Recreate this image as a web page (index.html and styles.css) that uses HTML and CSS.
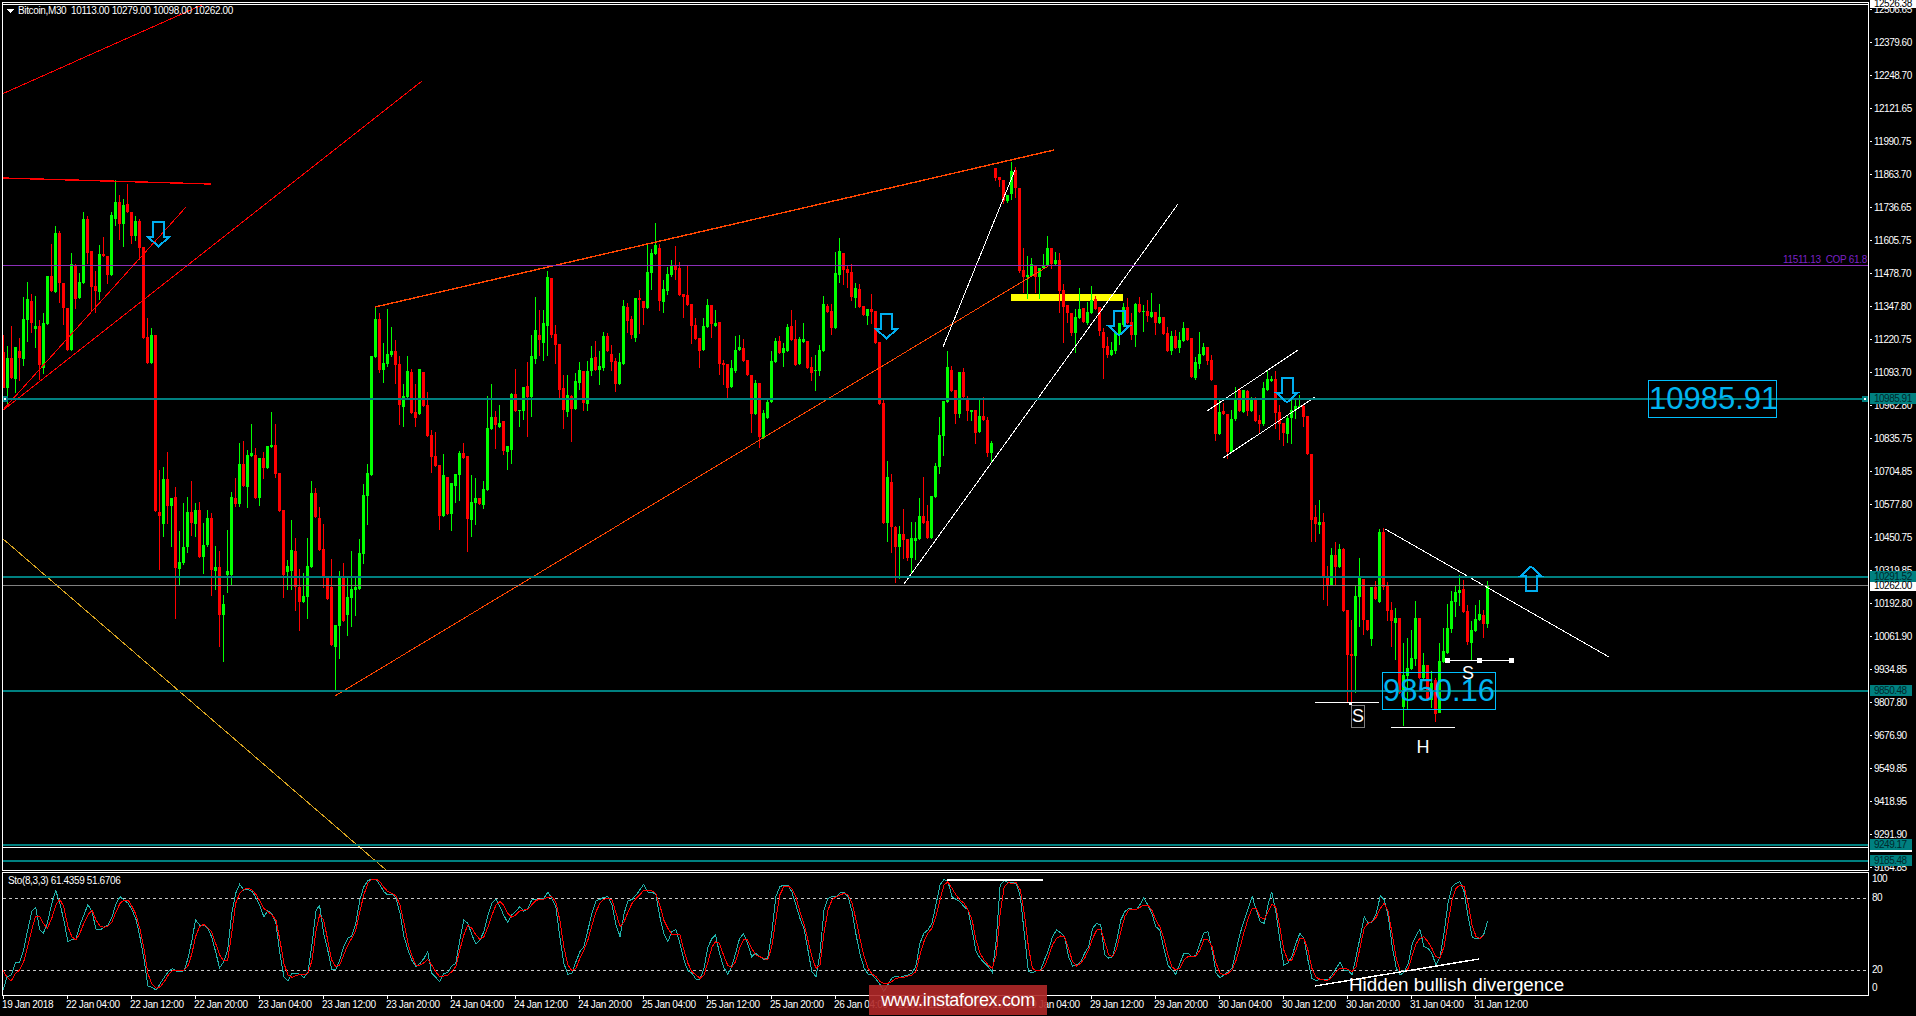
FILE: index.html
```html
<!DOCTYPE html>
<html lang="en">
<head>
<meta charset="utf-8">
<title>Bitcoin,M30</title>
<link rel="stylesheet" href="styles.css">
</head>
<body>
<div class="terminal">
  <section class="pane main-pane">
    <svg id="main-svg" class="plot" viewBox="0 0 1869 871" width="1869" height="871" shape-rendering="crispEdges">
      <rect class="yellow" x="1011" y="294" width="112" height="7"/>
      <g id="candles"></g>
      <line class="red" x1="2" y1="94" x2="202" y2="5"/>
      <line class="red" x1="2" y1="411" x2="422" y2="81"/>
      <line class="red" x1="2" y1="411" x2="186" y2="207"/>
      <line class="red thick" x1="2" y1="178" x2="211" y2="184"/>
      <line class="orange thick" x1="375" y1="307" x2="1054" y2="150"/>
      <line class="orange" x1="335" y1="696" x2="1050" y2="265"/>
      <line class="gold" x1="2" y1="538" x2="386" y2="870"/>
      <line class="white" x1="943" y1="347" x2="1015" y2="170"/>
      <line class="white" x1="904" y1="584" x2="1178" y2="204"/>
      <line class="white" x1="1207" y1="411" x2="1298" y2="350"/>
      <line class="white" x1="1223" y1="458" x2="1315" y2="397"/>
      <line class="white" x1="1385" y1="529" x2="1609" y2="657"/>
      <line class="white" x1="1315" y1="702" x2="1379" y2="702"/>
      <line class="white" x1="1391" y1="727" x2="1455" y2="727"/>
      <line class="white" x1="1447" y1="660" x2="1511" y2="660"/>
      <rect class="fill-white" x="1349" y="702" width="3" height="3"/>
      <rect class="fill-white" x="1445" y="658" width="5" height="5"/>
      <rect class="fill-white" x="1477" y="658" width="5" height="5"/>
      <rect class="fill-white" x="1509" y="658" width="5" height="5"/>
      <rect class="fill-purple" x="3" y="265" width="1865" height="1"/>
      <rect class="fill-teal" x="3" y="398" width="1865" height="2"/>
      <rect class="fill-teal" x="3" y="576" width="1865" height="2"/>
      <rect class="fill-grey" x="3" y="585" width="1865" height="1"/>
      <rect class="fill-teal" x="3" y="690" width="1865" height="2"/>
      <rect class="fill-teal" x="3" y="844" width="1865" height="2"/>
      <rect class="fill-white" x="3" y="847" width="1865" height="1"/>
      <rect class="fill-teal" x="3" y="860" width="1865" height="2"/>
      <rect class="fill-teal" x="2" y="396" width="6" height="6"/>
      <rect class="fill-white" x="4" y="398" width="2" height="2"/>
      <rect class="fill-teal" x="1862" y="396" width="6" height="6"/>
      <rect class="fill-white" x="1864" y="398" width="2" height="2"/>
      <path class="arrow" d="M153 222h11v15h5l-10.500 9.500l-10.500-9.500h5z"/>
      <path class="arrow" d="M881 314h11v15h5l-10.500 9.500l-10.500-9.500h5z"/>
      <path class="arrow" d="M1113.500 311h11v15h5l-10.500 9.500l-10.500-9.500h5z"/>
      <path class="arrow" d="M1281.500 378h11v15h5l-10.500 9.500l-10.500-9.500h5z"/>
      <path class="arrow" d="M1525.500 591h11v-15h5l-10.500-9.500l-10.500 9.500h5z"/>
      <rect class="fill-white" x="2" y="2" width="1867" height="1"/>
      <rect class="fill-white" x="2" y="4" width="1867" height="1"/>
      <rect class="fill-white" x="2" y="870" width="1867" height="1"/>
      <rect class="fill-white" x="2" y="2" width="1" height="869"/>
      <rect class="fill-white" x="1868" y="2" width="1" height="869"/>
      <polygon class="fill-white" points="7,9 14,9 10.500,13"/>
    </svg>
    <div class="legend">Bitcoin,M30&nbsp; 10113.00 10279.00 10098.00 10262.00</div>
    <div class="level-note">11511.13&nbsp; COP 61.8</div>
    <div class="big-tag tag-upper">10985.91</div>
    <div class="big-tag tag-lower">9850.16</div>
    <div class="mark mark-s1">S</div>
    <div class="mark mark-s2">S</div>
    <div class="mark mark-h">H</div>
  </section>

  <aside class="axis price-axis">
    <div class="ticks">
      <span>12506.65</span><span>12379.60</span><span>12248.70</span><span>12121.65</span><span>11990.75</span><span>11863.70</span><span>11736.65</span><span>11605.75</span><span>11478.70</span><span>11347.80</span><span>11220.75</span><span>11093.70</span><span>10962.80</span><span>10835.75</span><span>10704.85</span><span>10577.80</span><span>10450.75</span><span>10319.85</span><span>10192.80</span><span>10061.90</span><span>9934.85</span><span>9807.80</span><span>9676.90</span><span>9549.85</span><span>9418.95</span><span>9291.90</span><span>9164.85</span>
    </div>
    <div class="price-tag tag-bid">12526.38</div>
    <div class="price-tag teal wide t-10985">10985.91</div>
    <div class="price-tag teal wide t-10291">10291.52</div>
    <div class="price-tag tag-close">10262.00</div>
    <div class="price-tag teal t-9850">9850.48</div>
    <div class="price-tag teal t-9249">9249.17</div>
    <div class="tag-rule"></div>
    <div class="price-tag teal t-9185">9185.48</div>
  </aside>

  <section class="pane osc-pane">
    <svg id="osc-svg" class="plot" viewBox="0 871 1869 125" width="1869" height="125" shape-rendering="crispEdges">
      <line class="dash" x1="3" y1="898.500" x2="1868" y2="898.500"/>
      <line class="dash" x1="3" y1="970.500" x2="1868" y2="970.500"/>
      <polyline id="sto-main" class="sto-main"/>
      <polyline id="sto-signal" class="sto-signal"/>
      <line class="white thick" x1="947" y1="880" x2="1043" y2="880"/>
      <line class="white thick" x1="1315" y1="986" x2="1479" y2="959"/>
      <rect class="fill-white" x="2" y="872" width="1867" height="1"/>
      <rect class="fill-white" x="2" y="995" width="1867" height="1"/>
      <rect class="fill-white" x="2" y="872" width="1" height="124"/>
      <rect class="fill-white" x="1868" y="872" width="1" height="124"/>
    </svg>
    <div class="legend osc-legend">Sto(8,3,3) 61.4359 51.6706</div>
    <div class="divergence">Hidden bullish divergence</div>
  </section>

  <aside class="axis osc-axis">
    <span class="lvl lvl-100">100</span>
    <span class="lvl lvl-80">80</span>
    <span class="lvl lvl-20">20</span>
    <span class="lvl lvl-0">0</span>
  </aside>

  <footer class="axis time-axis">
    <span>19 Jan 2018</span><span>22 Jan 04:00</span><span>22 Jan 12:00</span><span>22 Jan 20:00</span><span>23 Jan 04:00</span><span>23 Jan 12:00</span><span>23 Jan 20:00</span><span>24 Jan 04:00</span><span>24 Jan 12:00</span><span>24 Jan 20:00</span><span>25 Jan 04:00</span><span>25 Jan 12:00</span><span>25 Jan 20:00</span><span>26 Jan 04:00</span><span>26 Jan 12:00</span><span>26 Jan 20:00</span><span>29 Jan 04:00</span><span>29 Jan 12:00</span><span>29 Jan 20:00</span><span>30 Jan 04:00</span><span>30 Jan 12:00</span><span>30 Jan 20:00</span><span>31 Jan 04:00</span><span>31 Jan 12:00</span>
  </footer>

  <div class="watermark">www.instaforex.com</div>
</div>
<script src="chart.js"></script>
</body>
</html>
```

FILE: styles.css
```css
* { box-sizing: border-box; }
html, body { margin: 0; padding: 0; background: #000; }
body { width: 1916px; height: 1016px; overflow: hidden; font-family: "Liberation Sans", Arial, sans-serif; color: #fff; }

.terminal {
  position: relative;
  width: 1916px;
  height: 1016px;
  display: grid;
  grid-template-columns: 1869px 47px;
  grid-template-rows: 871px 125px 20px;
  background: #000;
  overflow: hidden;
}
.pane { position: relative; }
.plot { display: block; }

/* plot objects */
.yellow { fill: #ffff00; }
.red, .orange, .gold, .white { fill: none; stroke-width: 1; }
.red { stroke: #ff0000; }
.orange { stroke: #ff4500; }
.gold { stroke: #daa520; }
.white { stroke: #fff; }
.red.thick, .orange.thick, .white.thick { stroke-width: 1.400; }
.fill-white { fill: #fff; }
.fill-teal { fill: #008080; }
.fill-grey { fill: #808080; }
.fill-purple { fill: #8b2fb8; }
.arrow { fill: none; stroke: #00aeef; stroke-width: 2; }
.bull { fill: #00ff00; }
.bear { fill: #ff0000; }
.dash { stroke: #c8c8c8; stroke-width: 1; stroke-dasharray: 3 3; }
.sto-main, .sto-signal { fill: none; stroke-width: 1; }
.sto-main { stroke: #20b2aa; }
.sto-signal { stroke: #ff0000; }

/* chart annotations */
.legend {
  position: absolute;
  left: 18px;
  top: 5px;
  font-size: 10px;
  line-height: 12px;
  letter-spacing: -0.36px;
  white-space: nowrap;
}
.osc-legend { left: 8px; top: 4px; }
.level-note {
  position: absolute;
  right: 2px;
  top: 254px;
  font-size: 10px;
  line-height: 12px;
  letter-spacing: -0.3px;
  color: #7b22c4;
  white-space: nowrap;
}
.big-tag {
  position: absolute;
  height: 38px;
  border: 1px solid #00bfff;
  color: #00b4f0;
  font-size: 31px;
  line-height: 36px;
  text-align: center;
  white-space: nowrap;
}
.tag-upper { left: 1648px; top: 380px; width: 129px; }
.tag-lower { left: 1382px; top: 672px; width: 114px; }
.mark {
  position: absolute;
  font-size: 18px;
  line-height: 22px;
  text-align: center;
}
.mark-s1 { left: 1351px; top: 705px; width: 14px; height: 23px; border: 1px solid #808080; line-height: 21px; }
.mark-s2 { left: 1461px; top: 662px; width: 14px; }
.mark-h { left: 1415px; top: 736px; width: 16px; }
.divergence {
  position: absolute;
  left: 1349px;
  top: 103px;
  font-size: 18.800px;
  line-height: 22px;
  white-space: nowrap;
}

/* axes */
.axis { font-size: 10px; letter-spacing: -0.5px; color: #fff; }
.price-axis { position: relative; overflow: hidden; }
.ticks { display: flex; flex-direction: column; margin-top: -7px; }
.ticks span {
  position: relative;
  height: 33px;
  line-height: 33px;
  padding-left: 5px;
  white-space: nowrap;
}
.ticks span::before {
  content: "";
  position: absolute;
  left: 1px;
  top: 16px;
  width: 2px;
  height: 1px;
  background: #fff;
}
.price-tag {
  position: absolute;
  left: 1px;
  width: 42px;
  height: 11px;
  line-height: 11px;
  padding-left: 4px;
  color: #00292c;
  white-space: nowrap;
}
.price-tag.wide { width: 46px; }
.teal { background: #008080; }
.tag-bid { top: 0; width: 46px; height: 8px; line-height: 7px; background: #fff; color: #000; }
.tag-close { top: 582px; width: 46px; height: 9px; line-height: 8px; background: #fff; color: #000; }
.t-10985 { top: 393px; }
.t-10291 { top: 571px; }
.t-9850 { top: 685px; }
.t-9249 { top: 839px; }
.t-9185 { top: 855px; }
.tag-rule { position: absolute; left: 1px; top: 850px; width: 42px; height: 2px; background: #fff; }

.osc-axis { position: relative; }
.lvl { position: absolute; left: 3px; line-height: 12px; }
.lvl-100 { top: 2px; }
.lvl-80 { top: 21px; }
.lvl-20 { top: 93px; }
.lvl-0 { top: 111px; }

.time-axis {
  grid-column: 1 / 3;
  display: flex;
  padding-left: 2px;
  letter-spacing: -0.35px;
}
.time-axis span {
  position: relative;
  flex: 0 0 64px;
  line-height: 18px;
  white-space: nowrap;
}
.time-axis span::before {
  content: "";
  position: absolute;
  left: 1px;
  top: 0;
  width: 1px;
  height: 3px;
  background: #fff;
}

.watermark {
  position: absolute;
  left: 869px;
  top: 985px;
  width: 178px;
  height: 30px;
  background: rgba(176, 40, 40, 0.9);
  color: #fff;
  font-size: 18px;
  letter-spacing: -0.35px;
  line-height: 30px;
  text-align: center;
  white-space: nowrap;
}
```

FILE: chart.js
```js
const SECTIONS = [
  [170, 0, "r 545 654 495 654|g 564 654 528 705|r 564 624 468 627|g 531 627 531 669|r 543 564 504 633|g 447 567 381 588|g 387 450 336 516|r 393 459 372 489|g 468 477 378 534|r 468 585 450 630|g 459 594 430 612|g 318 462 318 465|r 318 363 222 365|g 189 366 168 368|r 189 339 183 399|r 339 414 339 465|r 414 540 414 543|g 282 540 249 542|r 287 387 282 417|g 336 384 309 386|g 147 339 126 341|r 147 249 138 282|r 243 351 243 426|r 348 363 303 429|g 252 366 225 390|r 252 258 201 260|r 258 315 258 342|g 135 315 126 317|g 96 147 30 168|r 96 162 75 210|g 105 162 87 231|r 102 126 42 128|r 126 198 126 222|g 153 198 138 213|r 153 234 147 270|r 231 504 231 506|r 501 579 444 581|g 495 579 474 581"],
  [340, 38, "r -15 513 -15 515|r 516 527 390 690|g 417 552 381 590|r 417 497 337 552|g 474 498 474 620|r 471 684 441 837|g 666 687 573 735|g 621 669 489 675|g 516 621 470 640|r 516 549 423 588|g 510 552 489 590|r 510 651 486 655|g 615 651 549 702|g 534 615 510 620|r 534 690 519 768|g 681 693 618 750|r 681 825 633 921|g 792 825 765 965|g 693 705 570 760|g 471 705 456 738|r 474 492 414 500|g 372 492 309 500|r 372 438 303 440|g 345 441 330 504|g 339 348 252 350|r 345 474 324 476|g 354 474 354 498|r 354 384 335 417|g 318 384 318 386|g 315 321 217 325|r 315 402 252 415|r 399 513 399 515|r 510 705 510 774|g 678 696 660 750|g 630 693 540 750|r 633 741 594 813|r 741 786 687 873|g 768 786 700 790|g 678 771 594 837|g 459 681 423 683|r 459 531 444 533|r 534 630 501 632|r 627 711 552 744|r 711 777 711 780|r 741 915 657 917|g 855 921 855 1053|g 711 858 693 957|r 711 843 669 845|g 771 825 711 888|g 747 774 632 860|g 741 750 708 828|g 639 747 597 749|g 465 642 432 672|g 399 468 372 555|g 48 405 48 407|g -63 51 -99 53|r -63 90 -81 100|g 68 90 10 130|g 42 72 -93 80|g 33 45 -39 50|r 33 75 0 132|r 72 195 48 255|g 168 202 132 262|g 93 171 48 173|r 96 219 87 221|r 216 234 132 260|g 87 222 87 224|r 96 198 96 200|r 195 288 156 290|r 285 351 270 399|r 348 378 276 380|r 375 528 375 570|g 405 528 342 530|r 411 522 411 525|g 429 522 429 573|g 402 438 402 490|g 339 405 333 483|r 339 354 309 356|r 348 537 348 636|g 486 540 404 591|g 474 489 415 555|r 474 492 474 495|g 447 495 423 507|g 264 450 168 452|g 231 267 132 270|r 231 255 213 327|g 249 261 195 263|r 243 333 243 345|g 318 336 318 390|g 162 330 159 372|r 162 213 87 215|g 210 213 210 261|g 141 213 141 240|r 138 171 66 291|g 48 171 -15 231"],
  [210, 133, "g 360 447 261 462|r 375 390 300 438|g 339 399 300 453|g 201 348 183 438|r 204 375 204 384|r 372 405 345 462|r 402 540 402 570|r 534 600 495 657|g 555 606 495 620|r 558 597 555 696|g 513 597 489 600|g 480 519 456 540|r 483 579 483 603|g 483 582 453 603|g 444 483 408 498|r 441 480 393 483|g 468 480 423 525|g 378 474 366 483|r 378 423 369 425|r 432 456 405 483|r 453 522 444 546|g 456 522 429 525|g 288 462 270 464|r 291 333 279 369|r 327 375 318 387|g 264 384 264 396|r 264 270 240 372|r 273 294 273 345|g 186 294 102 296|g 129 189 117 240|g 105 132 39 134|r 114 273 102 303|g 237 276 210 309|g 192 243 171 255|g 168 195 150 201|r 168 180 108 210|r 174 255 156 257"],
  [230, 170, "r 192 201 192 264|r 195 225 108 227|r 222 288 222 342|r 285 327 264 329|r 324 363 324 414|g 288 360 264 362|g 225 291 207 293|r 225 282 225 324|g 279 288 240 290|r 276 402 276 435|r 399 405 390 465|r 402 474 402 504|g 414 471 390 473|g 360 423 318 430|g 351 360 315 362|r 354 393 327 395|r 390 435 390 437|r 435 552 435 609|g 459 552 450 554|r 459 621 459 654|g 549 624 540 626|g 516 564 507 566|g 393 516 363 518|g 333 396 324 398|r 333 369 318 371|g 354 369 339 411|g 291 363 282 365|r 288 330 240 332|r 327 405 270 407|g 327 402 321 404|g 327 336 279 338|r 333 414 333 416|r 411 429 381 453|g 420 423 375 483|g 360 423 345 438|g 222 363 198 365|r 228 246 222 248|r 243 294 222 315|g 129 294 66 296|g 63 135 24 159|r 69 120 69 165|r 117 129 105 174|r 126 201 102 213|g 174 204 159 234|r 177 231 162 233|r 228 255 228 257|g 237 258 237 285|r 237 246 192 282|r 243 339 243 341|r 336 522 336 524|r 519 879 510 881|g 741 879 693 936|r 756 891 732 969|r 891 951 888 1059|g 912 951 888 1047|r 912 930 837 987|r 927 984 927 993|g 924 984 876 1029|g 924 933 877 990|g 858 927 804 929|r 858 879 741 881|r 873 924 825 926|g 798 924 798 926|g 708 801 699 803|g 615 711 561 732|g 513 618 513 678|g 411 516 363 518|r 420 483 408 485|r 480 552 480 582|g 426 552 426 564|r 426 501 414 503|r 510 543 498 573|g 540 546 540 573|r 540 609 540 642|g 558 606 510 608|r 558 570 501 572|r 570 669 561 681|g 639 669 633 699"],
  [140, 248, "r 84 114 84 123|r 111 120 111 141|r 120 183 120 192|g 165 183 165 189|g 93 162 66 180|r 90 144 81 174|r 144 393 144 399|r 390 411 324 459|g 405 411 348 477|g 372 408 354 410|r 378 411 378 459|g 384 411 384 477|g 378 384 342 386|g 324 375 288 377|r 324 372 324 387|g 360 372 336 374|r 360 453 339 519|r 450 501 432 609|r 495 519 495 549|r 519 579 519 588|g 531 579 507 639|g 507 534 444 537|r 504 546 504 548|g 516 549 486 555|g 480 519 438 521|r 477 507 468 509|r 501 573 501 588|r 576 624 564 717|r 618 645 591 654|g 630 645 606 647|g 576 633 576 642|g 549 585 549 615|g 500 555 490 560|r 501 549 474 551|r 546 585 519 600|g 492 585 489 621|r 492 516 471 519|g 513 516 495 576|r 513 528 480 546|g 516 531 459 533|r 516 549 516 585|g 531 549 492 551|r 531 582 531 585|r 579 633 561 635|g 588 633 573 645|r 588 624 570 626|g 600 624 576 639|g 564 603 546 605|r 564 600 564 602|r 594 711 594 713|g 666 714 651 720|g 642 672 576 687|g 621 645 609 647|r 621 663 621 675|r 660 720 645 722"],
  [340, 303, "r 135 282 135 303|g 216 282 180 284|r 213 222 188 224|r 222 336 222 357|g 237 336 210 338|g 180 237 141 243|r 150 213 144 215|g 150 216 150 218|r 153 213 150 228|g 180 213 171 215|r 180 243 171 245|r 240 252 225 282|g 144 252 126 258|g 117 150 90 152|g 117 123 108 125|r 117 219 93 267|r 216 252 195 300|r 249 279 249 318|g 234 282 225 309|g 210 234 180 312|g 198 210 180 237|g 198 201 165 203|r 198 231 192 261|r 228 342 228 344|r 342 540 342 606"],
  [500, 328, "r 52 72 15 126|g 66 75 0 102|r 66 228 40 300|r 228 255 198 318|g 165 255 144 257|r 165 201 126 258|g 147 201 132 203|r 147 333 144 335|r 330 465 330 606|r 462 468 360 606|g 288 468 258 578|g 234 291 174 381|r 237 360 237 405|r 360 390 360 392|g 261 417 261 438|r 261 297 243 299|g 96 306 87 308|r 96 261 84 270|r 258 333 246 363|r 330 363 306 441|g 354 369 324 480|r 354 580 354 582|g 525 620 430 678|g 504 528 414 630|g 474 507 390 509|g 354 477 303 498|r 354 534 354 536|g 495 534 459 536|r 495 600 495 602|g 550 600 513 624|r 540 642 534 666|g 483 638 429 640|g 453 486 384 488|g 384 459 312 461|g 303 387 273 399|g 276 306 258 351|g 270 279 225 318|r 267 336 240 338|r 333 426 315 435|g 390 429 363 480|g 357 393 315 395|g 342 360 300 362|r 345 372 330 414|g 255 372 243 384"]
];

const Z4_MAIN = "7,450 16,410 25,405 35,367 44,366 53,330 62,270 72,212 80,202 89,270 97,280 106,250 116,190 125,152 134,190 143,240 152,305 161,298 170,298 179,255 188,225 197,194 206,215 215,268 224,270 233,262 242,255 251,230 260,190 269,170 278,180 287,190 296,210 305,240 314,295 323,360 331,438 340,442 350,450 359,430 368,412 377,395 386,386 395,393 404,395 413,392 422,350 430,300 438,240 447,255 456,255 465,265 474,290 483,335 492,384 501,365 510,330 519,220 528,160 537,133 546,150 555,148 565,155 574,175 583,200 591,230 600,212 609,222 618,250 627,340 636,410 645,423 654,400 663,400 672,403 681,413 690,395 699,310 708,210 716,197 725,280 734,330 743,388 752,390 761,360 770,320 779,295 788,288 797,250 806,180 815,140 824,122 833,117 842,118 851,135 860,155 869,165 878,163 887,175 896,220 905,290 914,330 923,362 932,380 941,370 950,355 958,335 967,400 976,412 985,425 994,400 1003,398 1012,378 1021,370 1030,300 1039,240 1048,250 1057,285 1066,312 1075,300 1084,275 1093,225 1102,188 1111,177 1120,200 1128,225 1137,247 1146,225 1155,215 1164,200 1173,213 1182,207 1191,180 1200,178 1210,177 1218,175 1227,157 1236,175 1245,200 1254,290 1263,370 1272,403 1281,400 1290,365 1299,335 1308,320 1317,270 1326,220 1335,183 1344,178 1353,172 1362,170 1371,195 1380,255 1389,290 1398,220 1407,183 1416,178 1425,165 1433,150 1442,133 1451,156 1460,157 1469,162 1478,230 1487,280 1496,305 1505,275 1514,268 1523,310 1532,360 1541,392 1550,400 1559,418 1568,418";
const Z4_SIGNAL = "7,392 16,412 25,423 35,400 44,390 53,365 62,320 72,265 80,228 89,228 97,250 106,265 116,235 125,195 134,178 143,200 152,260 161,290 170,300 179,280 188,250 197,225 206,210 215,240 224,258 233,262 242,258 251,245 260,215 269,190 278,180 287,180 296,200 305,225 314,270 323,330 331,400 340,432 350,445 359,440 368,425 377,405 386,392 395,392 404,392 413,390 422,375 430,340 438,290 447,260 456,253 465,262 474,275 483,310 492,345 501,362 510,360 519,280 528,190 537,160 546,148 555,145 565,150 574,165 583,185 591,205 600,215 609,225 618,240 627,300 636,370 645,405 654,412 663,407 672,403 681,405 690,400 699,360 708,270 716,225 725,240 734,300 743,360 752,380 761,375 770,345 779,315 788,295 797,270 806,215 815,165 824,130 833,118 842,117 851,125 860,142 869,155 878,160 887,168 896,195 905,250 914,310 923,350 932,375 941,375 950,368 958,358 967,375 976,395 985,410 994,408 1003,405 1012,395 1021,380 1030,330 1039,285 1048,255 1057,265 1066,285 1075,298 1084,290 1093,262 1102,225 1111,195 1120,185 1128,195 1137,220 1146,232 1155,225 1164,213 1173,210 1182,208 1191,195 1200,182 1210,177 1218,177 1227,172 1236,170 1245,185 1254,240 1263,320 1272,375 1281,392 1290,385 1299,355 1308,330 1317,300 1326,255 1335,215 1344,190 1353,178 1362,175 1371,180 1380,220 1389,260 1398,245 1407,215 1416,190 1425,175 1433,165 1442,150 1451,150 1460,152 1469,160 1478,195 1487,240 1496,265 1505,283 1514,283 1523,285 1532,330 1541,370 1550,395 1559,405 1568,415";
const Z5_MAIN = "7,385 14,320 21,295 27,285 34,340 41,380 48,403 55,380 62,340 69,295 76,282 83,310 90,350 97,340 104,350 111,358 118,355 125,280 132,170 139,140 146,135 153,136 160,155 167,195 174,235 181,265 188,330 195,395 202,410 209,340 216,210 223,175 230,170 237,170 244,158 251,157 258,170 265,215 272,285 279,345 286,385 293,403 300,405 307,418 314,435 320,455 327,435 334,415 341,408 348,412 355,408 362,405 369,400 376,380 383,310 390,280 397,270 404,250 411,195 418,135 425,118 432,125 439,170 446,178 453,185 460,200 467,210 474,270 481,335 488,355 495,368 502,380 509,397 516,300 523,135 530,122 537,128 544,128 551,130 558,170 565,280 572,395 579,398 586,393 593,392 600,360 607,330 614,290 621,270 628,278 635,290 642,350 649,378 656,375 663,365 670,340 677,320 684,265 691,250 698,255 705,345 712,355 719,350 726,300 733,240 740,215 747,205 754,208 761,208 768,190 773,172 780,195 787,220 794,260 801,270 808,325 815,375 822,390 829,403 836,370 843,340 850,340 857,350 864,345 871,310 878,278 885,275 892,330 899,400 906,413 913,405 920,395 927,385 934,330 941,280 948,240 955,205 962,170 969,210 976,245 983,250 990,190 996,155 1003,215 1010,300 1017,375 1024,370 1031,350 1038,310 1045,280 1052,295 1059,360 1066,415 1073,422 1080,418 1087,418 1094,420 1101,405 1108,385 1115,367 1122,390 1129,390 1136,405 1143,350 1150,290 1157,230 1164,250 1171,245 1178,220 1185,168 1192,180 1199,230 1206,320 1213,385 1220,405 1227,395 1234,370 1241,310 1248,285 1254,268 1261,320 1268,325 1275,340 1282,375 1289,350 1296,280 1303,190 1310,140 1317,130 1324,125 1331,155 1338,230 1345,290 1352,297 1359,295 1366,280 1372,243";
const Z5_SIGNAL = "7,405 14,365 21,320 27,306 34,310 41,345 48,375 55,382 62,365 69,325 76,298 83,300 90,325 97,345 104,350 111,355 118,360 125,320 132,240 139,165 146,140 153,138 160,145 167,170 174,215 181,250 188,300 195,350 202,385 209,375 216,280 223,210 230,180 237,170 244,165 251,160 258,165 265,190 272,240 279,300 286,350 293,385 300,403 307,410 314,425 320,430 327,430 334,425 341,415 348,413 355,412 362,408 369,405 376,395 383,345 390,305 397,280 404,265 411,230 418,180 425,135 432,125 439,145 446,165 453,180 460,190 467,210 474,240 481,300 488,340 495,360 502,375 509,385 516,345 523,220 530,140 537,128 544,130 551,128 558,150 565,220 572,320 579,385 586,392 593,392 600,380 607,350 614,315 621,295 628,288 635,290 642,325 649,365 656,378 663,370 670,355 677,330 684,295 691,270 698,268 705,305 712,345 719,350 726,325 733,275 740,230 747,210 754,208 761,208 768,200 773,195 780,195 787,210 794,240 801,260 808,295 815,345 822,380 829,390 836,385 843,360 850,350 857,348 864,348 871,330 878,298 885,300 892,320 899,370 906,400 913,405 920,400 927,390 934,360 941,320 948,275 955,235 962,205 969,205 976,232 983,237 990,215 996,193 1003,200 1010,260 1017,330 1024,360 1031,360 1038,330 1045,295 1052,295 1059,330 1066,385 1073,412 1080,418 1087,420 1094,420 1101,412 1108,395 1115,385 1122,385 1129,388 1136,395 1143,380 1150,320 1157,265 1164,248 1171,245 1178,232 1185,205 1192,190 1199,215 1206,285 1213,355 1220,395 1227,395 1234,385 1241,345 1248,310 1254,295 1261,290 1268,305 1275,325 1282,350 1289,355 1296,320 1303,250 1310,180 1317,145 1324,135 1331,140 1338,190 1345,255 1352,290 1359,295 1366,285";

const SVG_NS = "http://www.w3.org/2000/svg";

function rect(parent, cls, x, y, w, h) {
  const el = document.createElementNS(SVG_NS, "rect");
  el.setAttribute("class", cls);
  el.setAttribute("x", x);
  el.setAttribute("y", y);
  el.setAttribute("width", w);
  el.setAttribute("height", h);
  parent.appendChild(el);
}

function drawCandles() {
  const group = document.getElementById("candles");
  for (const [base, start, rows] of SECTIONS) {
    rows.split("|").forEach((row, n) => {
      const [kind, top, bottom, high, low] = row.split(" ");
      const i = start + n;
      const cls = kind === "g" ? "bull" : "bear";
      const yTop = Math.round(base + Number(top) / 3);
      const yBottom = Math.round(base + Number(bottom) / 3);
      const yHigh = Math.round(base + Number(high) / 3);
      const yLow = Math.round(base + Number(low) / 3);
      rect(group, cls, 3 + 4 * i, yHigh, 1, Math.max(1, yLow - yHigh));
      rect(group, cls, 2 + 4 * i, yTop, 3, Math.max(1, yBottom - yTop));
    });
  }
}

function toPoints(z4, z5) {
  const a = z4.split(" ").map(p => {
    const [x, y] = p.split(",").map(Number);
    return (x / 2.24).toFixed(1) + "," + (840 + y / 3).toFixed(1);
  });
  const b = z5.split(" ").map(p => {
    const [x, y] = p.split(",").map(Number);
    return (700 + x / 1.742).toFixed(1) + "," + (840 + y / 3).toFixed(1);
  });
  return a.concat(b).join(" ");
}

drawCandles();
document.getElementById("sto-main").setAttribute("points", toPoints(Z4_MAIN, Z5_MAIN));
document.getElementById("sto-signal").setAttribute("points", toPoints(Z4_SIGNAL, Z5_SIGNAL));
```
